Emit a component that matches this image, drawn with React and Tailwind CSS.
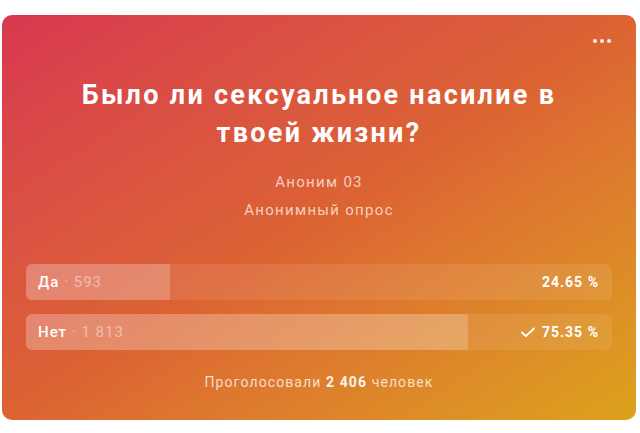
export default function App() {
  const options = [
    { label: "Да", votes: "593", pct: 24.65, chosen: false },
    { label: "Нет", votes: "1 813", pct: 75.35, chosen: true },
  ];
  return (
    <div className="w-[640px] h-[433px] bg-white pt-[15px] pl-[2px]" style={{ fontFamily: "Roboto, 'Noto Sans', sans-serif" }}>
      <div className="relative w-[634px] h-[405px] rounded-[10px] bg-gradient-to-br from-[#d8374f] via-[#dc6333] to-[#dca21a] px-6 pt-[61px]">
        <div className="absolute right-[25px] top-[24px] flex gap-[3px]">
          <span className="w-[4px] h-[4px] rounded-full bg-white/90" />
          <span className="w-[4px] h-[4px] rounded-full bg-white/90" />
          <span className="w-[4px] h-[4px] rounded-full bg-white/90" />
        </div>
        <h1 className="text-center text-white font-bold text-[27px] leading-[38px] tracking-[2.3px] px-8">
          Было ли сексуальное насилие в твоей жизни?
        </h1>
        <div className="mt-[16px] text-center text-[15px] leading-[28px] tracking-[1.3px] text-white/70">
          <div>Аноним 03</div>
          <div>Анонимный опрос</div>
        </div>
        <div className="mt-[40px] flex flex-col gap-[14px]">
          {options.map((o) => (
            <div key={o.label} className="relative h-[36px] rounded-[6px] bg-white/[0.09] overflow-hidden">
              <div className="absolute inset-y-0 left-0 bg-white/20" style={{ width: `${o.pct}%` }} />
              <div className="relative h-full flex items-center justify-between pl-3 pr-[13px] text-[15px] tracking-[1px]">
                <span className="text-white font-medium">
                  {o.label}
                  <span className="text-white/45 font-normal"> · {o.votes}</span>
                </span>
                <span className="flex items-center gap-[6px] text-white font-bold text-[14px] tracking-[1px]">
                  {o.chosen && (
                    <svg width="16" height="14" viewBox="0 0 16 14" fill="none">
                      <path d="M2 7.5l3.8 3.6L14 3.5" stroke="white" strokeWidth="1.9" strokeLinecap="round" strokeLinejoin="round" />
                    </svg>
                  )}
                  {o.pct.toFixed(2)} %
                </span>
              </div>
            </div>
          ))}
        </div>
        <div className="mt-[22px] text-center text-[14px] tracking-[1.1px] text-white/75">
          Проголосовали <span className="font-bold text-white/90">2 406</span> человек
        </div>
      </div>
    </div>
  );
}
